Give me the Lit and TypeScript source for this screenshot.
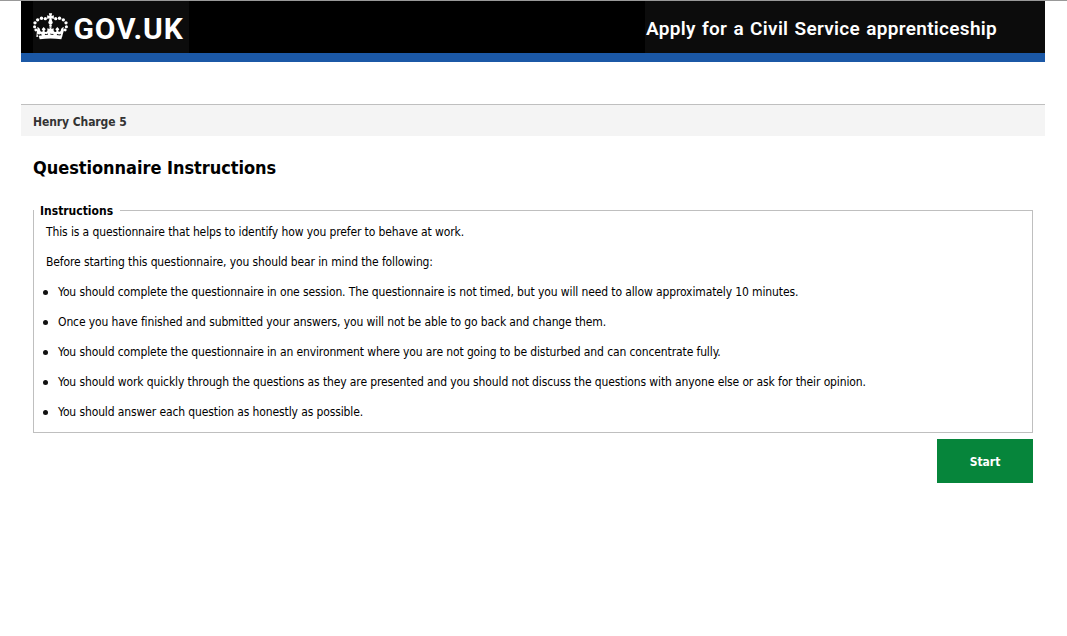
import { LitElement, html, css, svg } from "lit";
import { customElement } from "lit/decorators.js";

const intro = [
  "This is a questionnaire that helps to identify how you prefer to behave at work.",
  "Before starting this questionnaire, you should bear in mind the following:",
];

const points = [
  "You should complete the questionnaire in one session. The questionnaire is not timed, but you will need to allow approximately 10 minutes.",
  "Once you have finished and submitted your answers, you will not be able to go back and change them.",
  "You should complete the questionnaire in an environment where you are not going to be disturbed and can concentrate fully.",
  "You should work quickly through the questions as they are presented and you should not discuss the questions with anyone else or ask for their opinion.",
  "You should answer each question as honestly as possible.",
];

// Left-hand beads of the crown's arch; the right side is mirrored.
const beads = [
  [37, 17, 4.9], [25.5, 16, 5.2], [14, 20.5, 5.1], [6, 29.5, 5], [4.8, 41, 4.6], [8.5, 51, 4.4],
];

@customElement("crown-mark")
export class CrownMark extends LitElement {
  static styles = css`
    :host { display: block; }
    svg { display: block; width: 35px; height: 27px; fill: #fff; }
  `;
  render() {
    return html`<svg viewBox="0 0 105 81" aria-hidden="true">
      ${beads.map(([x, y, r]) => svg`<circle cx=${x} cy=${y} r=${r} /><circle cx=${105 - x} cy=${y} r=${r} />`)}
      <path d="M47.500 1h10l-2 8 7-2v11l-7-2 2 10h-10l2-10-7 2V7l7 2z" />
      <circle cx="52.5" cy="28.500" r="6.500" />
      <circle cx="52.5" cy="38" r="4" />
      <path d="M12 51c2-3 2-6 0-9 7 1 9 6 10 12 2 3 6 3 8 0l-4-5 6-7 6 7-4 5c2 4 6 4 9 0v-8l7 2-1-5h7l-1 5 7-2v8c3 4 7 4 9 0l-4-5 6-7 6 7-4 5c2 3 6 3 8 0 1-6 3-11 10-12-2 3-2 6 0 9l-6 21-6-1 3-9c-4 3-8 3-11 0l-4 8h-5l-4-8c-3 2-5 2-7-1l-1 8h-7l-1-8c-2 3-4 3-7 1l-4 8h-5l-4-8c-3 3-7 3-11 0l3 9-6 1z" />
      <path d="M17 68c24-4 47-4 71 0l-3 11c-21-3-44-3-65 0z" />
    </svg>`;
  }
}

@customElement("app-root")
export class AppRoot extends LitElement {
  static styles = css`
    :host {
      display: block;
      box-sizing: border-box;
      min-height: 636px;
      border-top: 1px solid #999;
      background: #fff;
      color: #000;
      font-family: "DejaVu Sans Condensed", "DejaVu Sans", sans-serif;
      font-size: 12px;
      line-height: 15px;
    }
    .page { width: 1024px; margin-left: 21px; }
    .banner {
      display: flex;
      justify-content: space-between;
      height: 52px;
      padding-left: 12px;
      background: #000;
      border-bottom: 9px solid #1b58a6;
      color: #fff;
    }
    .logo {
      display: flex;
      align-items: flex-start;
      width: 156px;
      background: #0c0c0c;
    }
    .logo crown-mark { margin-top: 12px; }
    .brand {
      margin: 11px 0 0 5.500px;
      font: bold 30px/34px Roboto, sans-serif;
      letter-spacing: 0.9px;
      white-space: nowrap;
    }
    .service {
      box-sizing: border-box;
      width: 400px;
      padding: 14px 0 0 1px;
      background: #0c0c0c;
      font: 600 19px/28px Roboto, sans-serif;
      letter-spacing: 0.3px;
      word-spacing: 1.2px;
      white-space: nowrap;
    }
    .user {
      margin-top: 42px;
      padding: 10px 12px 6px;
      border-top: 1px solid #bfbfbf;
      background: #f4f4f4;
      color: #333;
      font-weight: bold;
      letter-spacing: -0.08px;
    }
    main { padding: 0 12px; }
    h1 { margin: 21px 0 0; font-size: 18px; line-height: 22px; letter-spacing: -0.04px; }
    .panel {
      margin: 25px 0 0;
      padding: 0 12px 6px;
      min-width: 0;
      border: 1px solid #bfbfbf;
    }
    .panel legend {
      height: 12px;
      margin-left: -12px;
      padding: 0 7px 0 6px;
      font-weight: bold;
    }
    .copy { letter-spacing: -0.117px; white-space: nowrap; }
    .copy p { margin: 9px 0 15px; }
    .copy p + p { margin-top: 15px; }
    .copy ul { margin: 0; padding: 0; list-style: none; }
    .copy li {
      display: flex;
      align-items: center;
      gap: 10.5px;
      margin: 0 0 15px -3.5px;
    }
    .copy li:last-child { margin-bottom: 6px; }
    .dot { width: 5px; height: 5px; border-radius: 50%; background: #111; }
    .actions { display: flex; justify-content: flex-end; margin-top: 6px; }
    button {
      width: 96px;
      height: 44px;
      padding: 2px 0 0;
      border: 0;
      background: #06853b;
      color: #fff;
      font: bold 12px/15px "DejaVu Sans Condensed", "DejaVu Sans", sans-serif;
    }
  `;

  render() {
    return html`
      <div class="page">
        <header class="banner">
          <div class="logo"><crown-mark></crown-mark><span class="brand">GOV.UK</span></div>
          <div class="service">Apply for a Civil Service apprenticeship</div>
        </header>
        <div class="user">Henry Charge 5</div>
        <main>
          <h1>Questionnaire Instructions</h1>
          <fieldset class="panel">
            <legend>Instructions</legend>
            <div class="copy">
              ${intro.map((t) => html`<p>${t}</p>`)}
              <ul>${points.map((t) => html`<li><span class="dot"></span><span>${t}</span></li>`)}</ul>
            </div>
          </fieldset>
          <div class="actions"><button type="button">Start</button></div>
        </main>
      </div>
    `;
  }
}
